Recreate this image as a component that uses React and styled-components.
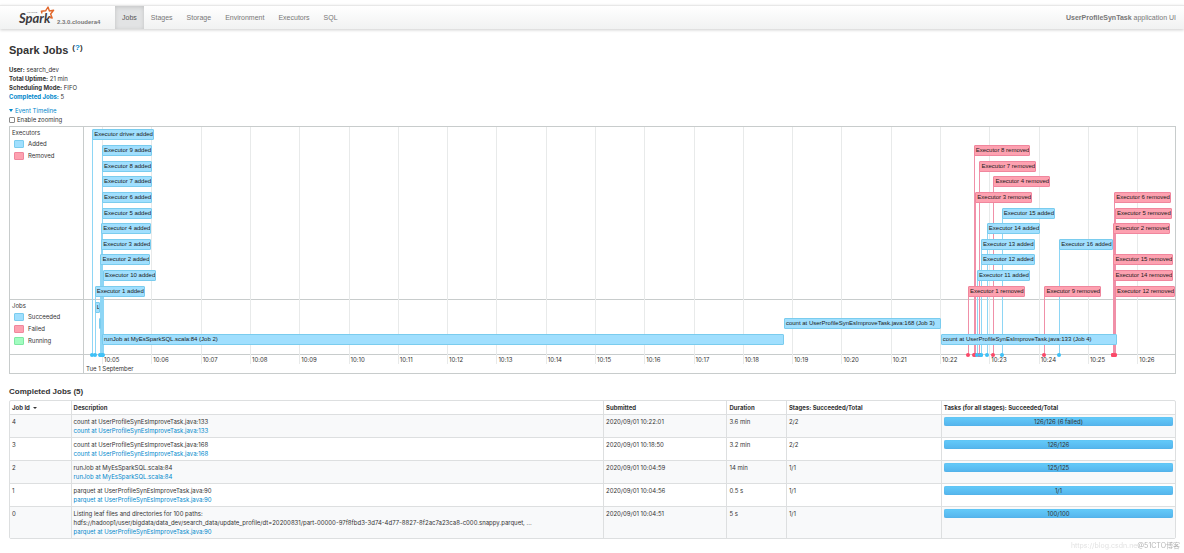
import styled, { createGlobalStyle } from "styled-components";

const GlobalStyle = createGlobalStyle`
  body {
    margin: 0;
    background: #fff;
    color: #333;
    font-family: Inter, "Liberation Sans", "Noto Sans CJK SC", sans-serif;
    font-size: 6px;
    line-height: 9px;
  }

  a {
    color: #0088cc;
    text-decoration: none;
  }
`;

const Navbar = styled.nav`
  display: flex;
  align-items: stretch;
  height: 23px;
  margin-top: 5px;
  padding: 0 8px 0 18px;
  border-top: 1px solid #e8e8e8;
  background: linear-gradient(#ffffff, #f1f2f2);
  box-shadow: 0 1px 3px rgba(0, 0, 0, 0.2);
  font-family: "Liberation Sans", Arial, sans-serif;
  font-size: 7px;
`;

const Brand = styled.a`
  display: flex;
  align-items: flex-end;
  gap: 2px;
  width: 97px;
`;

const Logo = styled.svg`
  display: block;
  width: 37px;
  height: 23px;
  overflow: visible;
`;

const Version = styled.span`
  padding-bottom: 2px;
  color: #777;
  font-size: 6px;
  font-weight: bold;
`;

const NavLinks = styled.div`
  display: flex;
  flex: 1;
`;

const NavLink = styled.a`
  display: flex;
  align-items: center;
  padding: 0 7px;
  color: ${({ $active }) => ($active ? "#555" : "#777")};
  background: ${({ $active }) => ($active ? "#e2e3e4" : "transparent")};
  box-shadow: ${({ $active }) => ($active ? "inset 0 1px 4px rgba(0, 0, 0, 0.15)" : "none")};
`;

const AppName = styled.p`
  display: flex;
  align-items: center;
  gap: 2px;
  margin: 0;
  color: #777;
`;

const Content = styled.main`
  padding: 14px 8px 0 9px;
`;

const Title = styled.h3`
  display: flex;
  align-items: flex-start;
  gap: 4px;
  margin: 0 0 8px;
  font-family: "Liberation Sans", Arial, sans-serif;
  font-size: 11px;
  line-height: 14px;
`;

const Help = styled.sup`
  font-size: 8px;
  line-height: 9px;
`;

const Summary = styled.ul`
  margin: 0 0 5px;
  padding: 0;
  list-style: none;
`;

const TimelineToggle = styled.button`
  display: flex;
  align-items: center;
  gap: 2px;
  padding: 0;
  border: none;
  background: none;
  color: #0088cc;
  font: inherit;
  cursor: pointer;
`;

const Caret = styled.span`
  display: inline-block;
  border-top: 3px solid currentColor;
  border-left: 2px solid transparent;
  border-right: 2px solid transparent;
`;

const ZoomLabel = styled.label`
  display: flex;
  align-items: center;
  gap: 2px;
`;

const Checkbox = styled.input`
  appearance: none;
  width: 6px;
  height: 6px;
  margin: 0;
  border: 1px solid #8a8a8a;
  border-radius: 1px;
  background: #fff;
`;

const Timeline = styled.section`
  display: grid;
  grid-template-columns: 74px 1fr;
  grid-template-rows: 173px 55px 18px;
  margin-top: 2px;
  border: 1px solid #c8cccc;
`;

const GroupLabel = styled.div`
  padding: 1px 2px;
  border-right: 1px solid #c8cccc;
  border-bottom: 1px solid #c8cccc;
`;

const Legend = styled.ul`
  display: flex;
  flex-direction: column;
  gap: 3px;
  margin: 2px 0 0 2px;
  padding: 0;
  list-style: none;
`;

const LegendItem = styled.li`
  display: flex;
  align-items: center;
  gap: 4px;

  &::before {
    content: "";
    width: 8px;
    height: 6px;
    border: 1px solid ${({ $kind }) => KINDS[$kind].border};
    border-radius: 1px;
    background: ${({ $kind }) => KINDS[$kind].fill};
  }
`;

const AxisCorner = styled.div`
  border-right: 1px solid #c8cccc;
`;

const Plot = styled.div`
  display: grid;
  grid-row: 1 / -1;
  grid-column: 2;
  grid-template-rows: subgrid;
  position: relative;
  overflow: hidden;
`;

const Lane = styled.div`
  display: flex;
  flex-direction: column;
  padding-bottom: ${({ $gap }) => $gap || 0}px;
  border-bottom: 1px solid #c8cccc;
`;

const LaneRow = styled.div`
  display: flex;
  flex: 1;
  align-items: center;
  position: relative;
`;

const Item = styled.div`
  position: absolute;
  box-sizing: border-box;
  height: 11px;
  border: 1px solid ${({ $kind }) => KINDS[$kind].border};
  border-radius: 1px;
  background: ${({ $kind }) => KINDS[$kind].fill};
  color: #1a1a1a;
  font-family: "Liberation Sans", Arial, sans-serif;
  text-indent: 1px;
  white-space: nowrap;
  overflow: hidden;
`;

const GridLine = styled.div`
  position: absolute;
  top: 0;
  bottom: 9px;
  width: 1px;
  background: #e8eaea;
`;

const Stem = styled.div`
  position: absolute;
  bottom: 18px;
  width: 1px;
  background: ${({ $kind }) => KINDS[$kind].stem};

  &::after {
    content: "";
    position: absolute;
    bottom: -2px;
    left: -2px;
    width: 4px;
    height: 4px;
    border-radius: 2px;
    background: ${({ $kind }) => KINDS[$kind].dot};
  }
`;

const Axis = styled.div`
  position: relative;
`;

const TickLabel = styled.span`
  position: absolute;
  top: 0;
  padding-left: 2px;
`;

const DateLabel = styled.span`
  position: absolute;
  top: 9px;
  left: 2px;
`;

const SectionTitle = styled.h4`
  margin: 13px 0 3px;
  font-family: "Liberation Sans", Arial, sans-serif;
  font-size: 8px;
  line-height: 10px;
`;

const Table = styled.table`
  width: 100%;
  table-layout: fixed;
  border: 1px solid #dddfe0;
  border-radius: 2px;
  border-spacing: 0;

  th,
  td {
    padding: 2px;
    border-left: 1px solid #dddfe0;
    text-align: left;
    vertical-align: top;
  }

  th:first-child,
  td:first-child {
    border-left: none;
  }

  td {
    border-top: 1px solid #dddfe0;
  }

  tbody tr:nth-child(odd) td {
    background: #f8f9fa;
  }
`;

const SortCaret = styled(Caret)`
  margin-left: 2px;
  border-top-width: 2px;
  vertical-align: middle;
`;

const Description = styled.span`
  display: block;
  white-space: pre-line;
`;

const Progress = styled.div`
  height: 9px;
  border-radius: 2px;
  background: linear-gradient(#64cbfa, #54b4ec);
  box-shadow: inset 0 0 1px #4aa3d8;
  text-align: center;
`;

const Watermark = styled.footer`
  display: flex;
  position: fixed;
  right: 4px;
  bottom: 3px;
  color: #b4b4b4;
  font-size: 7px;
`;

const SourceUrl = styled.span`
  color: #e2e2e2;
`;

const KINDS = {
  added: { fill: "#a0dffe", border: "#7accee", stem: "#8ed6f5", dot: "#3ec0f6" },
  removed: { fill: "#fda1b0", border: "#f0869d", stem: "#f090a8", dot: "#fb4868" },
  running: { fill: "#a2fcc0", border: "#7ee8a2" },
};

const ROW_HEIGHT = 173 / 11;
const PLOT_HEIGHT = 246;

const EXECUTOR_ROWS = [
  [["driver", "added", "10:04:48"]],
  [["9", "added", "10:05:00"], ["8", "removed", "10:22:41"]],
  [["8", "added", "10:05:00"], ["7", "removed", "10:22:48"]],
  [["7", "added", "10:05:00"], ["4", "removed", "10:23:05"]],
  [["6", "added", "10:05:00"], ["3", "removed", "10:22:43"], ["6", "removed", "10:25:32"]],
  [["5", "added", "10:05:00"], ["15", "added", "10:23:15"], ["5", "removed", "10:25:33"]],
  [["4", "added", "10:04:59"], ["14", "added", "10:22:57"], ["2", "removed", "10:25:31"]],
  [["3", "added", "10:04:59"], ["13", "added", "10:22:50"], ["16", "added", "10:24:25"]],
  [["2", "added", "10:04:58"], ["12", "added", "10:22:50"], ["15", "removed", "10:25:31"]],
  [["10", "added", "10:05:01"], ["11", "added", "10:22:45"], ["14", "removed", "10:25:31"]],
  [
    ["1", "added", "10:04:51"],
    ["1", "removed", "10:22:34"],
    ["9", "removed", "10:24:07"],
    ["12", "removed", "10:25:33"],
  ],
];

const JOB_ROWS = [
  [["Listing leaf files and directories for 100 paths: (Job 0)", "10:04:51", "10:04:57"]],
  [
    ["parquet at UserProfileSynEsImproveTask.java:90 (Job 1)", "10:04:56", "10:04:58"],
    ["count at UserProfileSynEsImproveTask.java:168 (Job 3)", "10:18:50", "10:22:01"],
  ],
  [
    ["runJob at MyEsSparkSQL.scala:84 (Job 2)", "10:05:00", "10:18:50"],
    ["count at UserProfileSynEsImproveTask.java:133 (Job 4)", "10:22:01", "10:25:35"],
  ],
];

const TICKS = Array.from({ length: 22 }, (_, i) => `10:${String(i + 5).padStart(2, "0")}`);

const JOBS = [
  {
    id: 4,
    description: "count at UserProfileSynEsImproveTask.java:133",
    link: "count at UserProfileSynEsImproveTask.java:133",
    submitted: "2020/09/01 10:22:01",
    duration: "3.6 min",
    stages: "2/2",
    tasks: "126/126 (6 failed)",
  },
  {
    id: 3,
    description: "count at UserProfileSynEsImproveTask.java:168",
    link: "count at UserProfileSynEsImproveTask.java:168",
    submitted: "2020/09/01 10:18:50",
    duration: "3.2 min",
    stages: "2/2",
    tasks: "126/126",
  },
  {
    id: 2,
    description: "runJob at MyEsSparkSQL.scala:84",
    link: "runJob at MyEsSparkSQL.scala:84",
    submitted: "2020/09/01 10:04:59",
    duration: "14 min",
    stages: "1/1",
    tasks: "125/125",
  },
  {
    id: 1,
    description: "parquet at UserProfileSynEsImproveTask.java:90",
    link: "parquet at UserProfileSynEsImproveTask.java:90",
    submitted: "2020/09/01 10:04:56",
    duration: "0.5 s",
    stages: "1/1",
    tasks: "1/1",
  },
  {
    id: 0,
    description:
      "Listing leaf files and directories for 100 paths:\nhdfs://hadoop1/user/bigdata/data_dev/search_data/update_profile/dt=20200831/part-00000-97f8fbd3-3d74-4d77-8827-8f2ac7a23ca8-c000.snappy.parquet, ...",
    link: "parquet at UserProfileSynEsImproveTask.java:90",
    submitted: "2020/09/01 10:04:51",
    duration: "5 s",
    stages: "1/1",
    tasks: "100/100",
  },
];

const toSeconds = (time) => {
  const [h, m, s = 0] = time.split(":").map(Number);
  return h * 3600 + m * 60 + s;
};

const START = toSeconds("10:04:38");
const SPAN = 1328;

// position of a clock time along the plot, in percent
const at = (time) => ((toSeconds(time) - START) / SPAN) * 100;

const SparkLogo = () => (
  <Logo viewBox="0 0 37 23" role="img" aria-label="Apache Spark">
    <text x="9" y="7" fontFamily="Lato, sans-serif" fontSize="2" fontWeight="bold" fill="#555">
      A P A C H E
    </text>
    <text
      x="1"
      y="17"
      fontFamily="Lato, sans-serif"
      fontSize="13"
      fontStyle="italic"
      fontWeight="bold"
      fill="#3c3a3e"
    >
      Spark
    </text>
    <path
      d="M24 7.5 L23.4 5.2 L27.6 4.8 L30 1 L31.4 5 L35.6 4.2 L32.6 8 L34.2 12 L31.2 11.2"
      fill="none"
      stroke="#e2672b"
      strokeWidth="1.4"
      strokeLinejoin="round"
    />
  </Logo>
);

const EventTimeline = () => (
  <Timeline>
    <GroupLabel>
      Executors
      <Legend>
        <LegendItem $kind="added">Added</LegendItem>
        <LegendItem $kind="removed">Removed</LegendItem>
      </Legend>
    </GroupLabel>
    <Plot>
      {TICKS.map((tick) => (
        <GridLine key={tick} style={{ left: `${at(tick)}%` }} />
      ))}
      {EXECUTOR_ROWS.map((row, i) =>
        row.map(([id, kind, time]) => (
          <Stem
            key={id + kind}
            $kind={kind}
            style={{
              left: `${at(time)}%`,
              top: `${(((i + 0.5) * ROW_HEIGHT) / PLOT_HEIGHT) * 100}%`,
            }}
          />
        ))
      )}
      <Lane>
        {EXECUTOR_ROWS.map((row, i) => (
          <LaneRow key={i}>
            {row.map(([id, kind, time]) => (
              <Item key={id + kind} $kind={kind} style={{ left: `${at(time)}%` }}>
                Executor {id} {kind}
              </Item>
            ))}
          </LaneRow>
        ))}
      </Lane>
      <Lane $gap={7}>
        {JOB_ROWS.map((row, i) => (
          <LaneRow key={i}>
            {row.map(([label, from, to]) => (
              <Item
                key={label}
                $kind="added"
                style={{ left: `${at(from)}%`, width: `${at(to) - at(from)}%` }}
              >
                {label}
              </Item>
            ))}
          </LaneRow>
        ))}
      </Lane>
      <Axis>
        {TICKS.map((tick) => (
          <TickLabel key={tick} style={{ left: `${at(tick)}%` }}>
            {tick}
          </TickLabel>
        ))}
        <DateLabel>Tue 1 September</DateLabel>
      </Axis>
    </Plot>
    <GroupLabel>
      Jobs
      <Legend>
        <LegendItem $kind="added">Succeeded</LegendItem>
        <LegendItem $kind="removed">Failed</LegendItem>
        <LegendItem $kind="running">Running</LegendItem>
      </Legend>
    </GroupLabel>
    <AxisCorner />
  </Timeline>
);

const CompletedJobs = () => (
  <Table>
    <colgroup>
      <col style={{ width: "5.2%" }} />
      <col style={{ width: "45.7%" }} />
      <col style={{ width: "10.6%" }} />
      <col style={{ width: "5.1%" }} />
      <col style={{ width: "13.3%" }} />
      <col style={{ width: "20.1%" }} />
    </colgroup>
    <thead>
      <tr>
        <th>
          Job Id <SortCaret />
        </th>
        <th>Description</th>
        <th>Submitted</th>
        <th>Duration</th>
        <th>Stages: Succeeded/Total</th>
        <th>Tasks (for all stages): Succeeded/Total</th>
      </tr>
    </thead>
    <tbody>
      {JOBS.map((job) => (
        <tr key={job.id}>
          <td>{job.id}</td>
          <td>
            <Description>{job.description}</Description>
            <a href="#job">{job.link}</a>
          </td>
          <td>{job.submitted}</td>
          <td>{job.duration}</td>
          <td>{job.stages}</td>
          <td>
            <Progress>{job.tasks}</Progress>
          </td>
        </tr>
      ))}
    </tbody>
  </Table>
);

const App = () => {
  return (
    <>
      <GlobalStyle />
      <Navbar>
        <Brand href="#home">
          <SparkLogo />
          <Version>2.3.0.cloudera4</Version>
        </Brand>
        <NavLinks>
          <NavLink href="#jobs" $active>Jobs</NavLink>
          <NavLink href="#stages">Stages</NavLink>
          <NavLink href="#storage">Storage</NavLink>
          <NavLink href="#environment">Environment</NavLink>
          <NavLink href="#executors">Executors</NavLink>
          <NavLink href="#sql">SQL</NavLink>
        </NavLinks>
        <AppName>
          <strong>UserProfileSynTask</strong> application UI
        </AppName>
      </Navbar>
      <Content>
        <Title>
          Spark Jobs
          <Help>
            (<a href="#help">?</a>)
          </Help>
        </Title>
        <Summary>
          <li><strong>User:</strong> search_dev</li>
          <li><strong>Total Uptime:</strong> 21 min</li>
          <li><strong>Scheduling Mode:</strong> FIFO</li>
          <li><a href="#completed"><strong>Completed Jobs:</strong></a> 5</li>
        </Summary>
        <TimelineToggle type="button">
          <Caret />
          Event Timeline
        </TimelineToggle>
        <ZoomLabel>
          <Checkbox type="checkbox" />
          Enable zooming
        </ZoomLabel>
        <EventTimeline />
        <SectionTitle id="completed">Completed Jobs (5)</SectionTitle>
        <CompletedJobs />
      </Content>
      <Watermark>
        <SourceUrl>https://blog.csdn.ne</SourceUrl>
        <span>@51CTO博客</span>
      </Watermark>
    </>
  );
};

export default App;
